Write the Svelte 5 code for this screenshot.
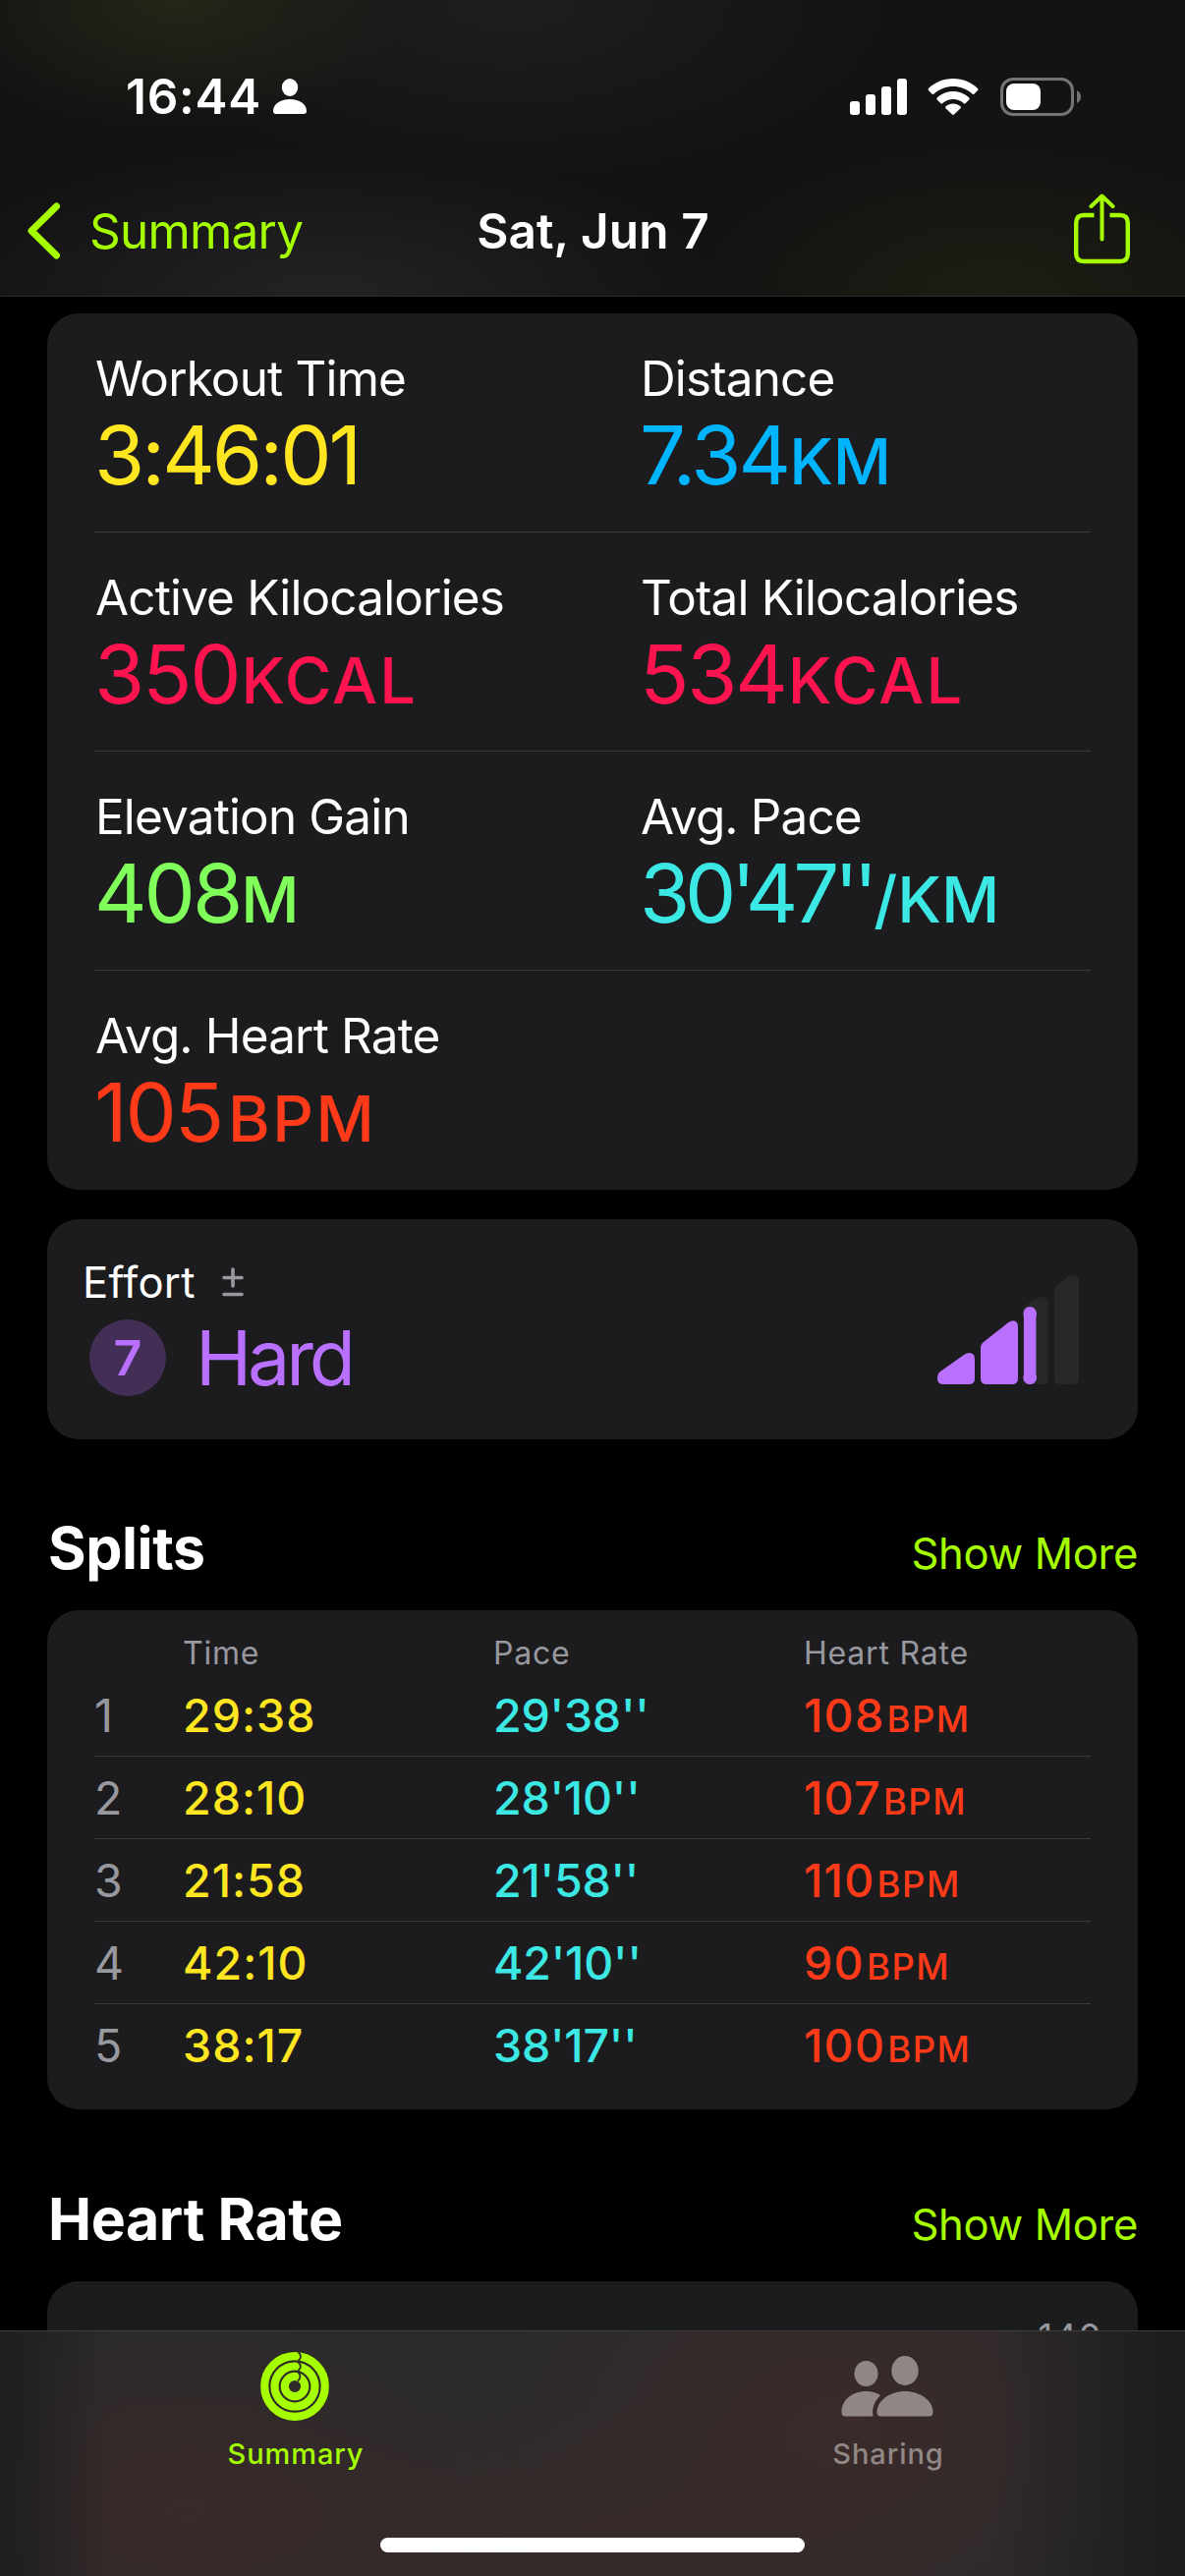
<script lang="ts">
	type Metric = { label: string; value: string; unit?: string; color: string };

	const metricRows: Metric[][] = [
		[
			{ label: 'Workout Time', value: '3:46:01', color: 'yellow' },
			{ label: 'Distance', value: '7.34', unit: 'KM', color: 'blue' },
		],
		[
			{ label: 'Active Kilocalories', value: '350', unit: 'KCAL', color: 'pink' },
			{ label: 'Total Kilocalories', value: '534', unit: 'KCAL', color: 'pink' },
		],
		[
			{ label: 'Elevation Gain', value: '408', unit: 'M', color: 'green' },
			{ label: 'Avg. Pace', value: "30'47''", unit: '/KM', color: 'cyan' },
		],
		[{ label: 'Avg. Heart Rate', value: '105', unit: 'BPM', color: 'red' }],
	];

	const splits = [
		{ time: '29:38', pace: "29'38''", bpm: 108 },
		{ time: '28:10', pace: "28'10''", bpm: 107 },
		{ time: '21:58', pace: "21'58''", bpm: 110 },
		{ time: '42:10', pace: "42'10''", bpm: 90 },
		{ time: '38:17', pace: "38'17''", bpm: 100 },
	];
</script>

<div class="screen">
	<header>
		<div class="status">
			<div class="clock">
				<span class="time">16:44</span>
				<svg class="person" width="34" height="36" viewBox="0 0 34 36" fill="#fff">
					<ellipse cx="17" cy="9" rx="8.2" ry="9" />
					<path d="M3 36Q0 36 0 33C0 26 7 21 17 21S34 26 34 33Q34 36 31 36Z" />
				</svg>
			</div>
			<div class="indicators">
				<svg width="58" height="38" viewBox="0 0 58 38" fill="#fff">
					<rect x="0" y="24" width="10" height="14" rx="3" />
					<rect x="16" y="17" width="10" height="21" rx="3" />
					<rect x="32" y="9" width="10" height="29" rx="3" />
					<rect x="48" y="1" width="10" height="37" rx="3" />
				</svg>
				<svg class="wifi" width="52" height="38" viewBox="0 0 52 38" fill="#fff">
					<path d="M26 1C36 1 45 5 51 11Q52 12 51 13L47.500 16.500Q46.500 17.500 45.500 16.500C40 11.500 33 9 26 9S12 11.500 6.500 16.500Q5.500 17.500 4.500 16.500L1 13Q0 12 1 11C7 5 16 1 26 1Z" />
					<path d="M26 14C32.500 14 38 16.500 42.300 20.500Q43 21.500 42.300 22.500L38.700 26Q37.700 27 36.700 26C33.500 23.300 30 22 26 22S18.500 23.300 15.300 26Q14.300 27 13.300 26L9.700 22.500Q9 21.500 9.700 20.500C14 16.500 19.500 14 26 14Z" />
					<path d="M26 26.500C29 26.500 31.500 27.600 33.500 29.300Q34.300 30.300 33.500 31.200L27 37.500Q26 38.400 25 37.500L18.500 31.200Q17.700 30.300 18.500 29.300C20.500 27.600 23 26.500 26 26.500Z" />
				</svg>
				<svg width="83" height="39" viewBox="0 0 83 39">
					<rect x="1.500" y="1.500" width="72" height="36" rx="11.500" fill="none" stroke="#747474" stroke-width="3" />
					<rect x="6" y="6" width="35" height="27" rx="8" fill="#fff" />
					<path d="M78 13Q82 15 82 19.500T78 26Z" fill="#747474" />
				</svg>
			</div>
		</div>
		<nav>
			<button class="back">
				<svg width="34" height="58" viewBox="0 0 34 58" fill="none" stroke="#a6ff00" stroke-width="7" stroke-linecap="round" stroke-linejoin="round">
					<path d="M29.500 4L4 29L29.500 54" />
				</svg>
				<span>Summary</span>
			</button>
			<h1>Sat, Jun 7</h1>
			<button class="share" aria-label="Share">
				<svg width="57" height="72" viewBox="0 0 57 72" fill="none" stroke="#a6ff00" stroke-width="4.400" stroke-linecap="round" stroke-linejoin="round">
					<path d="M20.500 22H10Q2.200 22 2.200 30V61Q2.200 69 10 69H47Q54.800 69 54.800 61V30Q54.800 22 47 22H36.500" stroke-linecap="butt" />
					<path d="M28.500 46.500V2.500M17.500 13L28.500 2.500L39.500 13" stroke-width="4" />
				</svg>
			</button>
		</nav>
	</header>

	<main>
		<section class="card metrics">
			{#each metricRows as row}
				<div class="metric-row">
					{#each row as m}
						<div class="metric">
							<div class="label">{m.label}</div>
							<div class="value {m.color}">{m.value}{#if m.unit}<span class="unit">{m.unit}</span>{/if}</div>
						</div>
					{/each}
				</div>
			{/each}
		</section>

		<section class="card effort">
			<div>
				<div class="effort-label">
					<span>Effort</span>
					<svg width="22" height="30" viewBox="0 0 22 30" stroke="#98989f" stroke-width="3.600" stroke-linecap="round">
						<path d="M2 10.500H20M11 2V19M2 27.500H20" />
					</svg>
				</div>
				<div class="effort-value">
					<span class="badge">7</span>
					<span class="hard">Hard</span>
				</div>
			</div>
			<svg class="effort-bars" width="146" height="112" viewBox="0 0 146 112">
				<g fill="#28282a">
					<path d="M87 34L98 26Q105 21 110 24Q113 26 113 30V106Q113 112 107 112H87Z" />
					<path d="M119 17Q119 13 122 11L133 2.500Q138-1 142 2Q144 4 144 7V106Q144 112 138 112H125Q119 112 119 106Z" />
				</g>
				<g fill="#b970ff">
					<path d="M3 99L27 82Q33 78 37 82Q38 84 38 87V106Q38 112 32 112H6Q0 112 0 106Q0 101 3 99Z" />
					<path d="M44 74Q44 71 47 69L71 50Q77 45 81 49Q82 51 82 54V106Q82 112 76 112H50Q44 112 44 106Z" />
					<rect x="88" y="33" width="12.400" height="79" rx="6.200" />
					<circle cx="94.200" cy="40.500" r="6.800" />
					<circle cx="94.200" cy="105.200" r="6.800" />
				</g>
			</svg>
		</section>

		<div class="heading">
			<h2>Splits</h2>
			<button class="more">Show More</button>
		</div>
		<section class="card splits">
			<div class="split head">
				<span></span>
				<span>Time</span>
				<span>Pace</span>
				<span>Heart Rate</span>
			</div>
			{#each splits as s, i}
				<div class="split">
					<span class="index">{i + 1}</span>
					<span class="time-value yellow">{s.time}</span>
					<span class="pace-value cyan">{s.pace}</span>
					<span class="rate-value red">{s.bpm}<span class="bpm">BPM</span></span>
				</div>
			{/each}
		</section>

		<div class="heading second">
			<h2>Heart Rate</h2>
			<button class="more">Show More</button>
		</div>
		<section class="card chart">
			<span class="axis">140</span>
		</section>
	</main>

	<footer>
		<div class="tabs">
			<button class="tab active">
				<svg width="70" height="70" viewBox="0 0 70 70" fill="none">
					<g stroke="#a6ff00" stroke-width="8.200">
						<circle cx="35" cy="35" r="30.800" />
						<circle cx="35" cy="35" r="20.500" />
						<circle cx="35" cy="35" r="10.200" />
					</g>
					<g stroke="#312b2a" stroke-width="1.800">
						<path d="M38.500 0Q43.500 4.500 38.500 9" />
						<path d="M38 10Q43.500 14.500 38.500 19" />
						<path d="M38 20Q43 25 38 29.500" />
					</g>
				</svg>
				<span>Summary</span>
			</button>
			<button class="tab">
				<svg width="94" height="70" viewBox="0 0 94 70" fill="#918886">
					<ellipse cx="25.500" cy="22" rx="12" ry="13" />
					<ellipse cx="65" cy="19" rx="13.700" ry="15" />
					<path d="M4.500 65.500Q.5 65.500 .5 61C.5 49 11 40 25.500 40Q34 40 40 44Q30 54 32.500 65.500Z" />
					<path d="M40.500 65.500Q36.500 65.500 36.500 61C36.500 50 49 40 65 40S93.500 50 93.500 61Q93.500 65.500 89.500 65.500Z" />
				</svg>
				<span>Sharing</span>
			</button>
		</div>
		<div class="home"></div>
	</footer>
</div>

<style>
:global(body) {
	background: #000;
}

.screen {
	width: 1206px;
	height: 2622px;
	display: flex;
	flex-direction: column;
	overflow: hidden;
	background: #000;
	color: #fff;
	font-family: Inter, "Liberation Sans", sans-serif;
}

.screen * {
	box-sizing: border-box;
}

button {
	background: none;
	border: none;
	padding: 0;
	font: inherit;
	color: #a6ff00;
}

h1, h2 {
	margin: 0;
}

svg {
	display: block;
	flex: none;
}

header {
	flex: none;
	height: 302px;
	border-bottom: 1px solid #2a2a2a;
	background:
		radial-gradient(ellipse 240px 130px at 180px 0, #242618, transparent),
		radial-gradient(ellipse 300px 150px at 1010px 302px, #1c1e12, transparent),
		radial-gradient(ellipse 400px 150px at 330px 302px, #232323, transparent),
		radial-gradient(ellipse 380px 180px at 520px 0, #1e1e1e, transparent),
		#131313;
}

.status {
	height: 166px;
	padding: 68px 105px 0 128px;
	display: flex;
	justify-content: space-between;
}

.clock, .indicators {
	height: 60px;
	display: flex;
	align-items: center;
}

.time {
	width: 150px;
	font-size: 49.500px;
	font-weight: 600;
	letter-spacing: .7px;
	white-space: nowrap;
}

.wifi {
	margin: 0 22px 0 21px;
}

nav {
	height: 136px;
	padding: 0 56px 0 28px;
	display: grid;
	grid-template-columns: 1fr auto 1fr;
	align-items: center;
}

.back {
	display: flex;
	align-items: center;
	gap: 29px;
	margin-top: 1px;
	font-size: 49.500px;
	letter-spacing: -.8px;
}

h1 {
	font-size: 49.500px;
	font-weight: 600;
	letter-spacing: .1px;
	margin: 1px 0 0 29px;
}

.share {
	justify-self: end;
	margin-top: -2px;
}

main {
	flex: 1;
	min-height: 0;
	overflow: hidden;
	padding: 17px 48px 0;
}

.card {
	background: #1c1c1e;
	border-radius: 32px;
	padding: 0 48px;
}

.metric-row {
	height: 223px;
	padding-top: 36px;
	display: grid;
	grid-template-columns: 555px 1fr;
	border-bottom: 1px solid #3a3a3c;
}

.metric-row:last-child {
	border-bottom: none;
}

.label {
	padding-left: 1px;
	font-size: 49.400px;
	line-height: 60px;
	letter-spacing: -.82px;
	white-space: nowrap;
}

.value {
	margin-top: 8px;
	font-size: 83px;
	line-height: 80px;
	letter-spacing: -3px;
	white-space: nowrap;
}

.unit {
	margin-left: 1px;
	font-size: 65px;
	font-weight: 500;
	line-height: 65px;
	letter-spacing: 0;
}

.yellow {
	color: #ffe620;
}

.blue {
	color: #00b5ff;
}

.pink {
	color: #ff1450;
}

.green {
	color: #80ff5a;
}

.cyan {
	color: #3ce8e4;
}

.red {
	color: #ff3a18;
}

/* unit kerning per metric */
.value.pink, .value.red {
	letter-spacing: -2.200px;
}

.value.cyan {
	letter-spacing: -5.200px;
}

.value.pink .unit {
	margin-left: 2px;
	letter-spacing: 2px;
}

.value.red .unit {
	margin-left: 6px;
	letter-spacing: 2.500px;
}

.value.cyan .unit {
	letter-spacing: 0;
}

.effort {
	height: 224px;
	margin-top: 30px;
	padding: 36px 58px 0 36px;
	display: flex;
	justify-content: space-between;
}

.effort-label {
	display: flex;
	align-items: center;
	gap: 27px;
	height: 56px;
	font-size: 43.600px;
	letter-spacing: .3px;
}

.effort-value {
	display: flex;
	align-items: center;
	margin: 10px 0 0 7px;
}

.badge {
	width: 78px;
	height: 78px;
	border-radius: 50%;
	display: flex;
	align-items: center;
	justify-content: center;
	background: #432f55;
	color: #b970ff;
	font-size: 50px;
	font-weight: 600;
}

.hard {
	margin-left: 30px;
	font-size: 77px;
	line-height: 78px;
	letter-spacing: -4.100px;
	color: #b970ff;
}

.effort-bars {
	margin-top: 20px;
}

.heading {
	height: 174px;
	padding: 73px 0 0 1px;
	display: flex;
	justify-content: space-between;
	align-items: baseline;
}

.heading.second {
	height: 175px;
	padding-top: 74px;
}

h2 {
	font-size: 59px;
	line-height: 76px;
	font-weight: 700;
	letter-spacing: -.4px;
}

.more {
	font-size: 43.600px;
	letter-spacing: -.35px;
}

.splits {
	height: 508px;
	padding-top: 23px;
}

.split {
	height: 84px;
	display: grid;
	grid-template-columns: 90px 316px 316px 1fr;
	align-items: center;
	border-bottom: 1px solid #3a3a3c;
	font-size: 46.500px;
	line-height: 84px;
}

.split:last-child {
	border-bottom: none;
}

.split.head {
	height: 42px;
	border-bottom: none;
	font-size: 32px;
	line-height: 42px;
	color: #98989f;
	letter-spacing: .8px;
}

.index {
	color: #98989f;
}

.time-value, .pace-value, .rate-value {
	font-weight: 450;
}

.time-value {
	letter-spacing: 1px;
}

.pace-value {
	letter-spacing: -.2px;
}

.rate-value {
	letter-spacing: 1.300px;
}

.bpm {
	margin-left: 2px;
	font-size: 36.500px;
	font-weight: 550;
	line-height: 40px;
	letter-spacing: 1.500px;
}

.chart {
	height: 400px;
	padding-top: 36px;
	padding-right: 36px;
	text-align: right;
}

.axis {
	font-size: 36px;
	line-height: 40px;
	letter-spacing: 1.600px;
	color: #98989f;
}

footer {
	flex: none;
	height: 250px;
	display: flex;
	flex-direction: column;
	justify-content: space-between;
	align-items: center;
	padding-bottom: 24px;
	border-top: 1px solid #3e3e40;
	background:
		linear-gradient(90deg, #1e1e1e, transparent 110px, transparent 1010px, #1c1c1c),
		radial-gradient(ellipse 360px 210px at 190px 180px, #3a2929, transparent),
		radial-gradient(ellipse 380px 260px at 850px 100px, #3b2a2a, transparent),
		radial-gradient(ellipse 420px 140px at 600px 210px, #362a2a, transparent),
		#2a2a2a;
}

.tabs {
	width: 100%;
	display: grid;
	grid-template-columns: 1fr 1fr;
}

.tab {
	display: flex;
	flex-direction: column;
	align-items: center;
	padding: 21px 3px 0 0;
	font-size: 29px;
	line-height: 40px;
	font-weight: 500;
	letter-spacing: .9px;
	color: #918886;
}

.tab span {
	margin: 14px 0 0 2px;
}

.tab.active {
	color: #a6ff00;
}

.home {
	width: 432px;
	height: 15px;
	border-radius: 8px;
	background: #fff;
}
</style>
